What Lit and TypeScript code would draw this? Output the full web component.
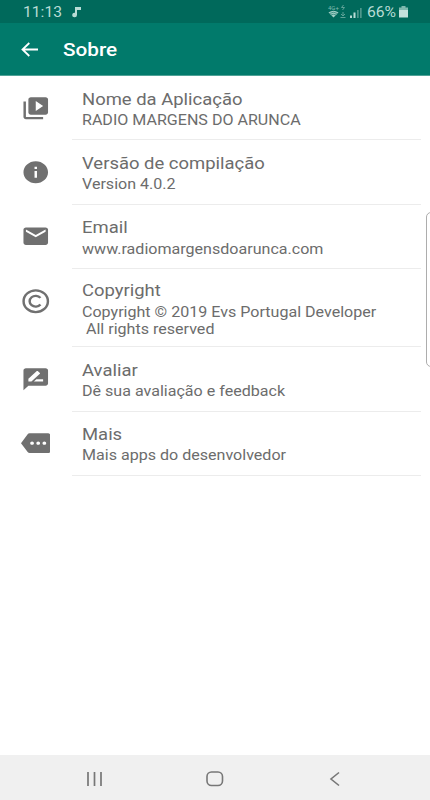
import { LitElement, html, css, svg } from "lit";
import { customElement } from "lit/decorators.js";

const icons = {
  library: svg`<path d="M4 6H2v14c0 1.1.9 2 2 2h14v-2H4V6zm16-4H8c-1.1 0-2 .9-2 2v12c0 1.1.9 2 2 2h12c1.1 0 2-.9 2-2V4c0-1.1-.9-2-2-2zm-8 12.500v-9l6 4.500-6 4.500z"/>`,
  info: svg`<path d="M12 2C6.480 2 2 6.480 2 12s4.480 10 10 10 10-4.480 10-10S17.520 2 12 2zm1 15h-2v-6h2v6zm0-8h-2V7h2v2z"/>`,
  email: svg`<path d="M20 4H4c-1.100 0-1.990.9-1.990 2L2 18c0 1.100.9 2 2 2h16c1.100 0 2-.9 2-2V6c0-1.100-.9-2-2-2zm0 4l-8 5-8-5V6l8 5 8-5v2z"/>`,
  copyright: svg`<circle cx="12" cy="12" r="9.900" fill="none" stroke="#707070" stroke-width="2"/><path d="M15.800 9A4.900 4.900 0 1 0 15.800 15" fill="none" stroke="#707070" stroke-width="2"/>`,
  review: svg`<path d="M20 2H4c-1.100 0-2 .9-2 2v18l4-4h14c1.100 0 2-.9 2-2V4c0-1.100-.9-2-2-2zM6 14v-2.470l6.880-6.880c.2-.2.510-.2.710 0l1.770 1.770c.2.2.2.510 0 .710L8.470 14H6zm12 0h-7.500l2-2H18v2z"/>`,
  more: svg`<path d="M22 3H7c-.690 0-1.230.350-1.590.880L0 12l5.410 8.110c.360.530.970.890 1.660.890H22c1.100 0 2-.9 2-2V5c0-1.100-.9-2-2-2zM9 13.500c-.830 0-1.500-.670-1.500-1.500s.670-1.500 1.500-1.500 1.500.670 1.500 1.500-.670 1.500-1.500 1.500zm5 0c-.830 0-1.500-.670-1.500-1.500s.670-1.500 1.500-1.500 1.500.670 1.500 1.500-.670 1.500-1.500 1.500zm5 0c-.830 0-1.500-.670-1.500-1.500s.670-1.500 1.500-1.500 1.500.670 1.500 1.500-.670 1.500-1.500 1.500z"/>`,
};

const rows = [
  { icon: icons.library, kind: "", title: "Nome da Aplicação", lines: ["RADIO MARGENS DO ARUNCA"] },
  { icon: icons.info, kind: "", title: "Versão de compilação", lines: ["Version 4.0.2"] },
  { icon: icons.email, kind: "", title: "Email", lines: ["www.radiomargensdoarunca.com"] },
  { icon: icons.copyright, kind: "tall", title: "Copyright", lines: ["Copyright © 2019 Evs Portugal Developer", " All rights reserved"] },
  { icon: icons.review, kind: "", title: "Avaliar", lines: ["Dê sua avaliação e feedback"] },
  { icon: icons.more, kind: "", title: "Mais", lines: ["Mais apps do desenvolvedor"] },
];

@customElement("app-root")
export class AppRoot extends LitElement {
  static styles = css`
    :host { display: flex; flex-direction: column; position: relative; width: 430px; height: 800px; overflow: hidden; background: #fff; font-family: Roboto, sans-serif; color: #6c6c6c; }
    * { box-sizing: border-box; }
    svg { display: block; flex: none; }
    .status { height: 23px; flex: none; background: #00695b; color: #b8dcd5; display: flex; align-items: center; padding: 1px 22px 0 23px; font-size: 14px; }
    .clock { width: 49px; }
    .wide { display: inline-block; transform: scaleX(1.12); transform-origin: 0 50%; white-space: pre; }
    .signals { margin-left: auto; }
    .percent { width: 32px; }
    .bar { height: 53px; flex: none; background: #017a6b; color: #fff; display: flex; align-items: center; padding: 1px 0 0 21px; border-bottom: 1px solid #4fa297; }
    .heading { margin: 0 0 0 25px; font-size: 18.500px; font-weight: 500; line-height: 22px; }
    .row { height: 64.400px; flex: none; display: flex; padding-left: 20.500px; }
    .tall { height: 78px; }
    .icon { width: 29.500px; height: 26.400px; margin-top: 18.500px; fill: #707070; }
    .body { margin-left: 21.500px; width: 349px; border-bottom: 1px solid #ececec; padding: 11.600px 0 0 10px; }
    .tall .body { padding-top: 10.300px; }
    .title { font-size: 17px; line-height: 22px; height: 22px; }
    .title .wide { transform: scaleX(1.085); }
    .line { font-size: 14.200px; line-height: 17px; height: 17px; margin-top: 2.300px; }
    .line .wide { transform: scaleX(1.132); }
    .line + .line { margin-top: 0; }
    .edge { position: absolute; left: 426px; top: 212px; width: 12px; height: 155px; border: 1px solid #adadad; border-radius: 5px; background: #fff; }
    .nav { margin-top: auto; height: 45px; flex: none; background: #f0f0f0; display: flex; align-items: center; justify-content: space-between; padding: 2px 84px 0 84px; }
  `;

  render() {
    return html`
      <div class="status">
        <div class="clock"><span class="wide">11:13</span></div>
        <svg width="9" height="12" viewBox="0 0 9 12" fill="#b8dcd5"><path d="M3 1h6v3H5v5a2.400 2.200 0 1 1-2-2.200z"/></svg>
        <svg class="signals" width="39" height="16" viewBox="0 0 39 16">
          <text x="0" y="6" font-size="6" fill="#7fb9af">4G+</text>
          <path d="M15.500 1l-2 2.500h3l-2 2.500M15 8v4M13 10l2 2 2-2M12.500 13.500h5" fill="none" stroke="#5fa398" stroke-width="1"/>
          <path d="M0.500 8.500q5-3.500 10 0L5.500 13.500z" fill="#a5d0c8"/><path d="M1.500 9.500q4-2.500 8 0M3 11q2.500-1.500 5 0" fill="none" stroke="#00695b" stroke-width=".6"/>
          <path d="M22 11.500h2v2.500h-2zM25.500 8.500h2v5.500h-2z" fill="#b8dcd5"/><path d="M29 6h1.700v8h-1.700zM32 4h1.700v10h-1.700z" fill="#4d978c"/>
        </svg>
        <div class="percent"><span class="wide">66%</span></div>
        <svg width="9" height="12" viewBox="0 0 9 12"><path d="M2.500 0h4v1.500H9V5H0V1.500h2.500z" fill="#7fb9af"/><path d="M0 4h9v7.500H0z" fill="#c4e2dd"/></svg>
      </div>
      <div class="bar">
        <svg width="17" height="15" viewBox="0 0 17 15" fill="none" stroke="#fff" stroke-width="1.800"><path d="M17 7.500H1.500M8.300 1L1.500 7.500l6.800 6.500"/></svg>
        <h1 class="heading"><span class="wide">Sobre</span></h1>
      </div>
      ${rows.map(r => html`
        <div class="row ${r.kind}">
          <svg class="icon" viewBox="0 0 24 24" preserveAspectRatio="none">${r.icon}</svg>
          <div class="body">
            <div class="title"><span class="wide">${r.title}</span></div>
            ${r.lines.map(l => html`<div class="line"><span class="wide">${l}</span></div>`)}
          </div>
        </div>`)}
      <div class="edge"></div>
      <div class="nav">
        <svg width="22" height="16" viewBox="0 0 22 16" stroke="#777" stroke-width="1.700"><path d="M4 1v14M10.500 1v14M17 1v14"/></svg>
        <svg width="18" height="16" viewBox="0 0 18 16" fill="none" stroke="#777" stroke-width="1.600"><rect x="1" y="1" width="15.500" height="13.500" rx="4.500"/></svg>
        <svg width="22" height="16" viewBox="0 0 22 16" fill="none" stroke="#777" stroke-width="1.600"><path d="M15 1.500L7 8l8 6.500"/></svg>
      </div>`;
  }
}
